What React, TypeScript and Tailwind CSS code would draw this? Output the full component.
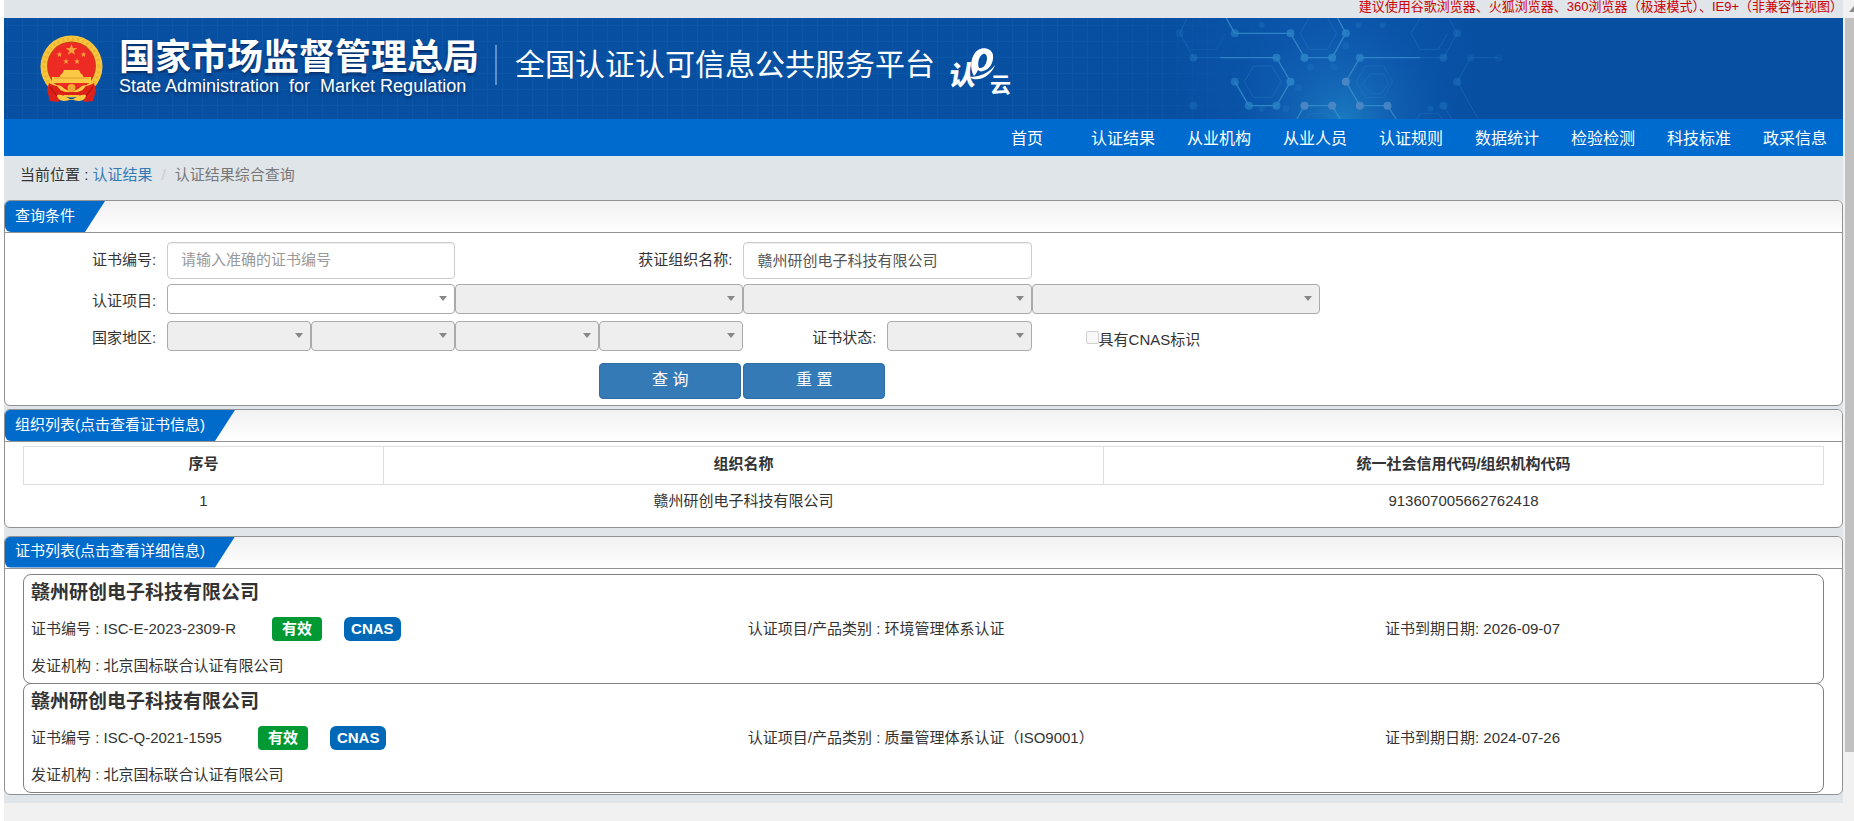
import { type ReactNode } from 'react';

const navItems = ['首页', '认证结果', '从业机构', '从业人员', '认证规则', '数据统计', '检验检测', '科技标准', '政采信息'];

const certificates = [
  {
    org: '赣州研创电子科技有限公司',
    code: 'ISC-E-2023-2309-R',
    category: '环境管理体系认证',
    expires: '2026-09-07',
    issuer: '北京国标联合认证有限公司',
  },
  {
    org: '赣州研创电子科技有限公司',
    code: 'ISC-Q-2021-1595',
    category: '质量管理体系认证（ISO9001）',
    expires: '2024-07-26',
    issuer: '北京国标联合认证有限公司',
  },
];

const STAR = '0,-1 0.235,-0.324 0.951,-0.309 0.38,0.124 0.588,0.809 0,0.4 -0.588,0.809 -0.38,0.124 -0.951,-0.309 -0.235,-0.324';

function Emblem() {
  const small: [number, number][] = [[19.5, 19.5], [43.5, 19.5], [26, 26.5], [37, 26.5]];
  return (
    <svg viewBox="0 0 63 67" className="h-[67px] w-[63px] shrink-0" aria-hidden="true">
      <circle cx="31.5" cy="31.5" r="31" fill="#f7c53c" />
      <circle cx="31.5" cy="31.5" r="27.5" fill="none" stroke="#eeb235" strokeWidth="3" strokeDasharray="2 3" />
      <circle cx="31.5" cy="31" r="24.5" fill="#c9441c" />
      <circle cx="31.5" cy="31" r="23.5" fill="#ee2a24" />
      <polygon points={STAR} transform="translate(31.5 15) scale(6)" fill="#f6a53a" />
      {small.map(([x, y]) => (
        <polygon key={x} points={STAR} transform={`translate(${x} ${y}) scale(3)`} fill="#f6a53a" />
      ))}
      <path d="M24 35h15l2 4h-19z M21 39h21l2 4h-25z M12 42h39v6h-39z" fill="#fbc944" />
      <path d="M14 43h35" stroke="#e39a2c" strokeWidth="1" />
      <path d="M9 48c8 6 37 6 45 0l2 7-3 11-8 1-6-7h-15l-6 7-8-1-3-11z" fill="#dd2119" />
      <path d="M17 50c4 0 6 3 10 5 3 2 6 2 9 0 4-2 6-5 10-5-2 5-6 7-10 7h-9c-4 0-8-2-10-7z" fill="#fbc944" />
      <circle cx="31.5" cy="53" r="4" fill="#f2a930" />
      <path d="M17 60c4-1 8 1 14.500 5 6.500-4 10.500-6 14.500-5 0 3-3 6-7 6-3 0-5-1-7.500-2-2.500 1-4.500 2-7.500 2-4 0-7-3-7-6z" fill="#fbc944" />
      <path d="M10 52l7 9M53 52l-7 9" stroke="#a8150f" strokeWidth="1.2" />
    </svg>
  );
}

function CloudLogo() {
  return (
    <svg viewBox="0 0 68 50" className="h-[50px] w-[68px] shrink-0 overflow-visible" role="img" aria-label="认e云" fill="#fff">
      <text
        x="0"
        y="0"
        transform="translate(1 39) skewX(-8)"
        fontSize="27"
        fontWeight="900"
        className="font-['Noto_Sans_CJK_SC',sans-serif]"
      >
        认
      </text>
      <path d="M22 31c11 0 20-4 26-12-3 9-13 16-22 14z" />
      <path
        fillRule="evenodd"
        d="M27 30C22 22 24 8 31 4c6-4 14-1 15 5 1 8-4 15-10 16-2 1-4 0-5-1-1 2-2 4-4 6zM32 22c5 1 8-5 8-10 0-3-2-5-4-4-4 2-6 9-4 14z"
      />
      <text x="43" y="46" fontSize="21" fontWeight="700" className="font-['Noto_Sans_CJK_SC',sans-serif]">
        云
      </text>
    </svg>
  );
}

function HeaderBackdrop() {
  const nodes: [number, number, number][] = [
    [194, 70, 0.6], [361, 70, 0.8], [527, 70, 0.8], [403, 143, 0.9], [486, 143, 0.9], [569, 143, 0.8],
    [319, 143, 0.8], [361, 215, 0.9], [319, 287, 0.8], [236, 287, 0.7], [194, 215, 0.6], [527, 215, 1],
    [569, 287, 1], [652, 287, 0.9], [403, 287, 1], [486, 287, 1], [70, 143, 0.4], [820, 143, 0.4],
    [861, 70, 0.3], [861, 215, 0.35], [70, 287, 0.3], [820, 287, 0.35], [29, 70, 0.2], [901, 143, 0.2], [985, 143, 0.12],
  ];
  return (
    <div className="absolute inset-0 overflow-hidden" aria-hidden="true">
      <div className="h-full w-[72%] bg-[linear-gradient(to_right,#1a63b3_1px,transparent_1px),linear-gradient(to_bottom,#1a63b3_1px,transparent_1px)] bg-[size:15px_16px] bg-[position:3px_7px] opacity-35 [mask-image:linear-gradient(to_right,black_80%,transparent)]" />
      <svg viewBox="0 24 1400 303" className="absolute left-[63.4%] top-0 h-full w-[467px]" fill="none">
        <defs>
          <radialGradient id="glow" gradientUnits="userSpaceOnUse" cx="520" cy="330" r="330">
            <stop offset="0" stopColor="#1d82c4" stopOpacity="0.85" />
            <stop offset="0.5" stopColor="#1668b8" stopOpacity="0.5" />
            <stop offset="1" stopColor="#0f5cb3" stopOpacity="0" />
          </radialGradient>
          <radialGradient id="haze" gradientUnits="userSpaceOnUse" cx="470" cy="160" r="470">
            <stop offset="0" stopColor="#0f5db5" stopOpacity="0.7" />
            <stop offset="1" stopColor="#0f5db5" stopOpacity="0" />
          </radialGradient>
        </defs>
        <rect x="0" y="24" width="1400" height="303" fill="url(#haze)" />
        <rect x="0" y="24" width="1400" height="303" fill="url(#glow)" />
        <g stroke="#3b93cd" strokeWidth="4" opacity="0.75">
          <path d="M168 24L194 70M194 70H361L403 143H486L527 70L502 24" />
          <path d="M150 143H319L361 215L319 287H236L194 215" />
          <path d="M750 143H569L527 215L569 287H652L678 327" />
          <path d="M380 327L403 287H486L510 327" />
        </g>
        <g stroke="#2a7cc4" strokeWidth="3" opacity="0.4">
          <path d="M70 143L29 70L50 24M70 143H150M750 143H820M820 143L861 70L836 24M985 143H901L861 215L924 327M820 287L845 327" />
          <path d="M250 168H305L333 215L305 262H250L223 215ZM585 168H640L667 215L640 262H585L558 215Z" />
          <path d="M417 24L390 70L417 118H472L499 70L472 24M750 24L722 70L750 118H805L832 70" />
          <path d="M600 192H640L655 220L635 250H600L578 220ZM405 327L417 311H472L482 327M740 327L750 311H805L816 327" />
          <path d="M50 24L30 70L58 118H140L165 70" opacity="0.5" />
        </g>
        {nodes.map(([x, y, o]) => (
          <circle key={`${x}-${y}`} cx={x} cy={y} r="12" fill={y > 200 && x > 380 && x < 670 ? '#4a86c4' : '#2a83c6'} opacity={o} />
        ))}
        <g fill="#1f76c0" opacity="0.35">
          <circle cx="420" cy="171" r="10" />
          <circle cx="491" cy="171" r="10" />
          <circle cx="384" cy="233" r="10" />
          <circle cx="347" cy="296" r="10" />
          <circle cx="275" cy="296" r="9" />
          <circle cx="527" cy="107" r="10" />
          <circle cx="565" cy="45" r="9" />
          <circle cx="637" cy="45" r="9" />
          <circle cx="781" cy="296" r="9" />
          <circle cx="275" cy="45" r="9" />
        </g>
      </svg>
    </div>
  );
}

function Panel({ title, className, children }: { title: string; className: string; children: ReactNode }) {
  return (
    <section className={`overflow-hidden rounded-md border border-[#929292] bg-white ${className}`}>
      <div className="flex h-8 border-b border-[#929292] bg-linear-to-b from-[#f1f1f1] to-white">
        <h2 className="flex items-center rounded-bl-md bg-[#006bcb] pr-[30px] pb-[2px] pl-[10px] text-white [clip-path:polygon(0_0,100%_0,calc(100%-20px)_100%,0_100%)]">
          {title}
        </h2>
      </div>
      {children}
    </section>
  );
}

function Dropdown({ id, label, disabled, width }: { id: string; label?: string; disabled?: boolean; width: string }) {
  return (
    <div className={`relative h-[30px] ${width}`}>
      <select
        id={id}
        aria-label={label}
        disabled={disabled}
        className="h-full w-full appearance-none rounded-[4px] border border-[#aaa] bg-white px-2 disabled:bg-[#eee]"
      >
        <option value="" />
      </select>
      <svg viewBox="0 0 8 5" className="pointer-events-none absolute top-3 right-2 h-[5px] w-2" aria-hidden="true">
        <path d="M0 0h8L4 5z" fill="#888" />
      </svg>
    </div>
  );
}

const inputClass =
  'h-[37px] w-[16%] rounded-[4px] border border-[#ccc] bg-white px-[13px] pb-[2px] text-[#555] shadow-[inset_0_1px_1px_rgba(0,0,0,0.075)] placeholder:text-[#999]';

export default function App() {
  return (
    <div className="flex min-h-screen bg-[#f1f1f1] pl-1 font-['Liberation_Sans','Noto_Sans_CJK_SC',sans-serif] text-[15px] leading-5 text-[#333] shadow-[inset_4px_0_0_#fff]">
      <div className="min-w-0 flex-1">
        <div className="bg-[#e0e5e9] pb-2">
          <p className="h-[18px] truncate text-right text-[13px] leading-[14px] text-[#c00]">
            建议使用谷歌浏览器、火狐浏览器、360浏览器（极速模式）、IE9+（非兼容性视图）
          </p>

          <header className="relative flex h-[101px] items-center bg-[#074fa1] pl-9 text-white">
            <HeaderBackdrop />
            <div className="relative flex items-center">
              <Emblem />
              <div className="ml-4 pb-1 [text-shadow:0_2px_3px_rgba(0,20,60,0.6)]">
                <h1 className="text-[36px] leading-[38px] font-bold">国家市场监督管理总局</h1>
                <p className="text-[18px] leading-[18px] whitespace-pre">State Administration  for  Market Regulation</p>
              </div>
              <div className="flex items-center pb-2">
                <span className="ml-4 h-10 w-[2px] bg-[#5f8fc8]" />
                <span className="ml-[18px] text-[30px] leading-10">全国认证认可信息公共服务平台</span>
              </div>
              <span className="ml-3 pt-1">
                <CloudLogo />
              </span>
            </div>
          </header>

          <nav className="flex h-[37px] justify-end bg-[#006bcf] pt-[2px] text-base text-white">
            {navItems.map((item) => (
              <a key={item} href="#" className="flex w-24 items-center justify-center">
                {item}
              </a>
            ))}
          </nav>

          <div className="flex h-11 items-center px-4 pb-[6px]">
            <span>当前位置 :&nbsp;</span>
            <a href="#" className="text-[#337ab7]">认证结果</a>
            <span className="px-[9px] text-[#ccc]">/</span>
            <span className="text-[#777]">认证结果综合查询</span>
          </div>

          <Panel title="查询条件" className="">
            <form className="px-[18px] pt-[9px] pb-[6px]" onSubmit={(e) => e.preventDefault()}>
              <div className="flex items-center">
                <label htmlFor="certNo" className="w-[8%] pr-[11px] pb-[2px] text-right">证书编号:</label>
                <input id="certNo" type="text" placeholder="请输入准确的证书编号" className={inputClass} />
                <label htmlFor="orgName" className="w-[16%] pr-[11px] pb-[2px] text-right">获证组织名称:</label>
                <input id="orgName" type="text" defaultValue="赣州研创电子科技有限公司" className={inputClass} />
              </div>
              <div className="mt-[5px] flex">
                <label htmlFor="project1" className="w-[8%] pt-[7px] pr-[11px] text-right">认证项目:</label>
                <Dropdown id="project1" width="w-[16%]" />
                <Dropdown id="project2" label="认证项目 2" width="w-[16%]" disabled />
                <Dropdown id="project3" label="认证项目 3" width="w-[16%]" disabled />
                <Dropdown id="project4" label="认证项目 4" width="w-[16%]" disabled />
              </div>
              <div className="mt-[7px] flex">
                <label htmlFor="region1" className="w-[8%] pt-[7px] pr-[11px] text-right">国家地区:</label>
                <Dropdown id="region1" width="w-[8%]" disabled />
                <Dropdown id="region2" label="国家地区 2" width="w-[8%]" disabled />
                <Dropdown id="region3" label="国家地区 3" width="w-[8%]" disabled />
                <Dropdown id="region4" label="国家地区 4" width="w-[8%]" disabled />
                <label htmlFor="status" className="w-[8%] pt-[7px] pr-[11px] text-right">证书状态:</label>
                <Dropdown id="status" width="w-[8%]" disabled />
                <label className="ml-[3%] flex items-center pt-[7px]">
                  <input
                    type="checkbox"
                    disabled
                    className="mb-1 size-[13px] appearance-none rounded-[2px] border border-[#d0d0d0] bg-[#f8f8f8]"
                  />
                  具有CNAS标识
                </label>
              </div>
              <div className="mt-3 ml-[32%] flex">
                <div className="w-[11.76%] pr-[2px]">
                  <button type="submit" className="h-9 w-full rounded-[4px] border border-[#2e6da4] bg-[#337ab7] pb-[2px] text-base text-white">
                    查 询
                  </button>
                </div>
                <div className="w-[11.76%] pr-[2px]">
                  <button type="reset" className="h-9 w-full rounded-[4px] border border-[#2e6da4] bg-[#337ab7] pb-[2px] text-base text-white">
                    重 置
                  </button>
                </div>
              </div>
            </form>
          </Panel>

          <Panel title="组织列表(点击查看证书信息)" className="mt-[3px]">
            <div className="px-[18px] pt-1 pb-[6px]">
              <table className="w-full table-fixed border-collapse text-center">
                <thead>
                  <tr className="h-[38px]">
                    <th className="w-[20%] border border-[#ddd] pb-[3px] font-bold">序号</th>
                    <th className="w-[40%] border border-[#ddd] pb-[3px] font-bold">组织名称</th>
                    <th className="w-[40%] border border-[#ddd] pb-[3px] font-bold">统一社会信用代码/组织机构代码</th>
                  </tr>
                </thead>
                <tbody>
                  <tr className="h-[36px]">
                    <td className="pb-[3px]">1</td>
                    <td className="pb-[3px]">赣州研创电子科技有限公司</td>
                    <td className="pb-[3px]">913607005662762418</td>
                  </tr>
                </tbody>
              </table>
            </div>
          </Panel>

          <Panel title="证书列表(点击查看详细信息)" className="mt-2">
            <div className="px-[18px] pt-[5px] pb-px">
              {certificates.map((c) => (
                <article key={c.code} className="rounded-[8px] border border-[#808080] pl-[7px] not-first:-mt-px">
                  <h3 className="text-[19px] leading-[36px] font-bold">{c.org}</h3>
                  <div className="grid h-[37px] grid-cols-[18fr_16fr_11fr] items-center">
                    <div className="flex items-center">
                      <span>证书编号 : {c.code}</span>
                      <span className="ml-9 rounded-[4px] bg-[#009933] px-[10px] py-[2px] font-bold text-white">有效</span>
                      <span className="ml-[22px] rounded-[6px] bg-[#0068b7] px-[7px] py-[2px] font-bold text-white">CNAS</span>
                    </div>
                    <span>认证项目/产品类别 : {c.category}</span>
                    <span>证书到期日期: {c.expires}</span>
                  </div>
                  <p className="leading-[35px]">发证机构 : {c.issuer}</p>
                </article>
              ))}
            </div>
          </Panel>
        </div>
      </div>

      <div className="flex w-[11px] flex-col overflow-hidden bg-[#f1f1f1] pl-[2px]" aria-hidden="true">
        <div className="flex h-[18px] shrink-0 items-center">
          <svg viewBox="0 0 10 6" className="ml-1 h-[6px] w-[10px] shrink-0">
            <path d="M0 6L5 0l5 6z" fill="#8a8a8a" />
          </svg>
        </div>
        <div className="flex-[32] bg-[#c1c1c1]" />
        <div className="flex-[3]" />
      </div>
    </div>
  );
}
